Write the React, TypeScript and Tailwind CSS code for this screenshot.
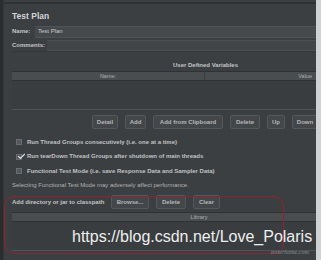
import { Check } from "lucide-react";

const tableButtons = [
  { label: "Detail", w: "w-[26px]" },
  { label: "Add", w: "w-[21px]" },
  { label: "Add from Clipboard", w: "w-[70px]" },
  { label: "Delete", w: "w-[30px]" },
  { label: "Up", w: "w-[18px]" },
  { label: "Down", w: "w-[26px]" },
];

const options = [
  { label: "Run Thread Groups consecutively (i.e. one at a time)", checked: false },
  { label: "Run tearDown Thread Groups after shutdown of main threads", checked: true },
  { label: "Functional Test Mode (i.e. save Response Data and Sampler Data)", checked: false },
];

const Btn = ({ label, className = "" }: { label: string; className?: string }) => (
  <div
    className={`flex h-[14px] shrink-0 items-center justify-center rounded-[2px] border border-[#55585a] bg-[#44474a] text-[6px] font-bold text-[#b4b6b8] ${className}`}
  >
    {label}
  </div>
);

const App = () => {
  return (
    <div className="relative flex h-[260px] w-[321px] overflow-hidden bg-[#2c2f31] font-['Liberation_Sans',Arial,sans-serif]">
      <div className="w-[3px] shrink-0 bg-[#2a2c2e]" />
      <div className="flex w-[313px] shrink-0 flex-col border-l border-[#34373a] bg-[#3c3f41] pt-[2px]">
        <div className="h-[2px] bg-[#2f3234]" />
        <div className="flex flex-col pl-[8px] text-[#c2c4c6]">
          {/* title */}
          <div className="mt-[6px] h-[12px] text-[8.5px] font-bold leading-[12px] text-[#d2d4d6]">
            Test Plan
          </div>

          {/* name / comments */}
          <div className="mt-[3px] flex flex-col border-b border-[#35383a]">
            <div className="flex h-[13px] items-center">
              <span className="w-[23px] text-[6px] font-bold">Name:</span>
              <div className="flex h-[12px] flex-1 items-center border-y border-[#505356] bg-[#46494b] pl-[3px] text-[6px] text-[#c8cacc]">
                Test Plan
              </div>
            </div>
            <div className="mt-[1px] flex h-[12px] items-center">
              <span className="w-[35px] text-[6px] font-bold">Comments:</span>
              <div className="h-[11px] flex-1 border-y border-[#4c4f52] bg-[#424547]" />
            </div>
          </div>

          {/* user defined variables */}
          <div className="mt-[8px] h-[10px] pl-[161px] text-[6px] font-bold leading-[10px]">
            User Defined Variables
          </div>
          <div className="mt-[1px] flex h-[10px] border-y border-[#2f3234] bg-[#4a4d50] text-[5.5px] text-[#aeb0b2]">
            <div className="flex w-[193px] items-center justify-center border-r border-[#3b3e40]">Name:</div>
            <div className="flex flex-1 items-center justify-end pr-[4px]">Value</div>
          </div>
          <div className="h-[29px] border-b border-[#505356] bg-[#3a3d3f]" />

          {/* table buttons */}
          <div className="mt-[5px] flex gap-[7px] pl-[80px]">
            {tableButtons.map((b) => (
              <Btn key={b.label} label={b.label} className={b.w} />
            ))}
          </div>

          {/* options */}
          <div className="mt-[8px] flex flex-col gap-[4.5px] pl-[4px]">
            {options.map((o) => (
              <div key={o.label} className="flex h-[10px] items-center gap-[5px] text-[6px] font-bold text-[#c0c2c4]">
                <div className="relative flex h-[6px] w-[6px] items-center justify-center border border-[#6a6d70] bg-[#55585a]">
                  {o.checked && (
                    <Check className="absolute -top-[3px] left-0 h-[9px] w-[9px] text-[#e0e2e4]" strokeWidth={3} />
                  )}
                </div>
                {o.label}
              </div>
            ))}
          </div>
          <div className="mt-[4px] h-[10px] text-[6px] leading-[10px] text-[#b0b2b4]">
            Selecting Functional Test Mode may adversely affect performance.
          </div>

          {/* classpath */}
          <div className="mt-[5px] flex h-[14px] items-center">
            <span className="w-[99px] text-[6px] font-bold">Add directory or jar to classpath</span>
            <div className="flex gap-[7px]">
              <Btn label="Browse..." className="w-[38px]" />
              <Btn label="Delete" className="w-[30px]" />
              <Btn label="Clear" className="w-[27px]" />
            </div>
          </div>
          <div className="mt-[3px] flex h-[10px] items-center justify-center border-y border-[#2f3234] bg-[#4a4d50] pl-[70px] text-[5.5px] text-[#aeb0b2]">
            Library
          </div>
          <div className="h-[29px] border-b border-[#505356] bg-[#3a3d3f]" />
        </div>
      </div>
      <div className="w-[5px] shrink-0 bg-[#cfd1d3]" />

      {/* annotation overlay */}
      <div className="pointer-events-none absolute left-[4px] top-[196px] h-[58px] w-[280px] rounded-[10px] border border-[#8e2432]" />
      <div className="pointer-events-none absolute left-[72px] top-[226px] text-[16px] leading-[22px] text-[#eceef0]">
        https://blog.csdn.net/Love_Polaris
      </div>
      <div className="pointer-events-none absolute left-[271px] top-[248px] font-['Liberation_Serif',serif] text-[6px] italic text-[#8c8e90]">
        testerhome.com
      </div>
    </div>
  );
};

export default App;
